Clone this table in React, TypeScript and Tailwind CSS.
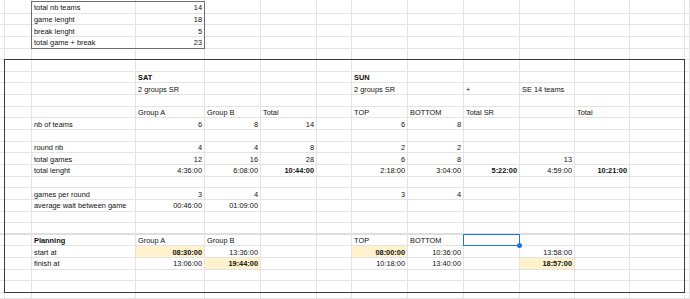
import React from "react";

type Cell = { c: number; t: string; r?: boolean; b?: boolean; y?: boolean };

const data: Record<number, Cell[]> = {
  0: [{ c: 2, t: "total nb teams" }, { c: 3, t: "14", r: true }],
  1: [{ c: 2, t: "game lenght" }, { c: 3, t: "18", r: true }],
  2: [{ c: 2, t: "break lenght" }, { c: 3, t: "5", r: true }],
  3: [{ c: 2, t: "total game + break" }, { c: 3, t: "23", r: true }],
  6: [{ c: 3, t: "SAT", b: true }, { c: 7, t: "SUN", b: true }],
  7: [
    { c: 3, t: "2 groups SR" },
    { c: 7, t: "2 groups SR" },
    { c: 9, t: "+" },
    { c: 10, t: "SE 14 teams" },
  ],
  9: [
    { c: 3, t: "Group A" },
    { c: 4, t: "Group B" },
    { c: 5, t: "Total" },
    { c: 7, t: "TOP" },
    { c: 8, t: "BOTTOM" },
    { c: 9, t: "Total SR" },
    { c: 11, t: "Total" },
  ],
  10: [
    { c: 2, t: "nb of teams" },
    { c: 3, t: "6", r: true },
    { c: 4, t: "8", r: true },
    { c: 5, t: "14", r: true },
    { c: 7, t: "6", r: true },
    { c: 8, t: "8", r: true },
  ],
  12: [
    { c: 2, t: "round nb" },
    { c: 3, t: "4", r: true },
    { c: 4, t: "4", r: true },
    { c: 5, t: "8", r: true },
    { c: 7, t: "2", r: true },
    { c: 8, t: "2", r: true },
  ],
  13: [
    { c: 2, t: "total games" },
    { c: 3, t: "12", r: true },
    { c: 4, t: "16", r: true },
    { c: 5, t: "28", r: true },
    { c: 7, t: "6", r: true },
    { c: 8, t: "8", r: true },
    { c: 10, t: "13", r: true },
  ],
  14: [
    { c: 2, t: "total lenght" },
    { c: 3, t: "4:36:00", r: true },
    { c: 4, t: "6:08:00", r: true },
    { c: 5, t: "10:44:00", r: true, b: true },
    { c: 7, t: "2:18:00", r: true },
    { c: 8, t: "3:04:00", r: true },
    { c: 9, t: "5:22:00", r: true, b: true },
    { c: 10, t: "4:59:00", r: true },
    { c: 11, t: "10:21:00", r: true, b: true },
  ],
  16: [
    { c: 2, t: "games per round" },
    { c: 3, t: "3", r: true },
    { c: 4, t: "4", r: true },
    { c: 7, t: "3", r: true },
    { c: 8, t: "4", r: true },
  ],
  17: [
    { c: 2, t: "average wait between game" },
    { c: 3, t: "00:46:00", r: true },
    { c: 4, t: "01:09:00", r: true },
  ],
  20: [
    { c: 2, t: "Planning", b: true },
    { c: 3, t: "Group A" },
    { c: 4, t: "Group B" },
    { c: 7, t: "TOP" },
    { c: 8, t: "BOTTOM" },
  ],
  21: [
    { c: 2, t: "start at" },
    { c: 3, t: "08:30:00", r: true, b: true, y: true },
    { c: 4, t: "13:36:00", r: true },
    { c: 7, t: "08:00:00", r: true, b: true, y: true },
    { c: 8, t: "10:36:00", r: true },
    { c: 10, t: "13:58:00", r: true },
  ],
  22: [
    { c: 2, t: "finish at" },
    { c: 3, t: "13:06:00", r: true },
    { c: 4, t: "19:44:00", r: true, b: true, y: true },
    { c: 7, t: "10:18:00", r: true },
    { c: 8, t: "13:40:00", r: true },
    { c: 10, t: "18:57:00", r: true, b: true, y: true },
  ],
};

const NCOLS = 14;
const NROWS = 27; // grid rows: 0 partial, 1..25 data rows (k=0..24), 26 partial

export default function App() {
  const cells: React.ReactNode[] = [];
  for (let gr = 0; gr < NROWS; gr++) {
    const k = gr - 1;
    const rowData = data[k] || [];
    for (let c = 0; c < NCOLS; c++) {
      const cell = rowData.find((d) => d.c === c);
      const thick = k === 19;
      cells.push(
        <div
          key={`${gr}-${c}`}
          style={{ gridRow: gr + 1, gridColumn: c + 1 }}
          className={[
            "flex items-center overflow-visible whitespace-nowrap border-r border-b border-[#e3e3e3] px-[2px] pt-[1.5px] text-[7.4px] leading-none text-[#111]",
            thick ? "border-b-2 border-b-[#dedede]" : "",
            cell?.r ? "justify-end" : "justify-start",
            cell?.b ? "font-bold" : "",
            cell?.y ? "bg-[#fff2cc]" : "bg-white",
          ].join(" ")}
        >
          {cell ? cell.t : null}
        </div>
      );
    }
  }

  return (
    <div className="h-[299px] w-[690px] overflow-hidden bg-white font-['Liberation_Sans',Arial,sans-serif]">
      <div className="grid h-[299px] w-[690px] grid-cols-[5px_27px_104px_69px_56px_56px_35px_56px_56px_56px_55px_55px_55px_5px] grid-rows-[2px_repeat(25,11.65px)_5.75px]">
        {cells}
        {/* top summary box */}
        <div className="pointer-events-none col-[3/5] row-[2/6] -mt-[1px] -ml-[1px] border border-[#6e6e6e]" />
        {/* main box */}
        <div className="pointer-events-none col-[2/14] row-[7/27] -mt-[1px] -ml-[1px] border-[1.5px] border-[#3a3a3a]" />
        {/* selected cell */}
        <div className="pointer-events-none relative col-[10/11] row-[22/23] -mt-[1px] -ml-[1px] border-[1.5px] border-[#1a73e8]">
          <div className="absolute -right-[3px] -bottom-[3px] h-[5px] w-[5px] rounded-full bg-[#1a73e8]" />
        </div>
      </div>
    </div>
  );
}
